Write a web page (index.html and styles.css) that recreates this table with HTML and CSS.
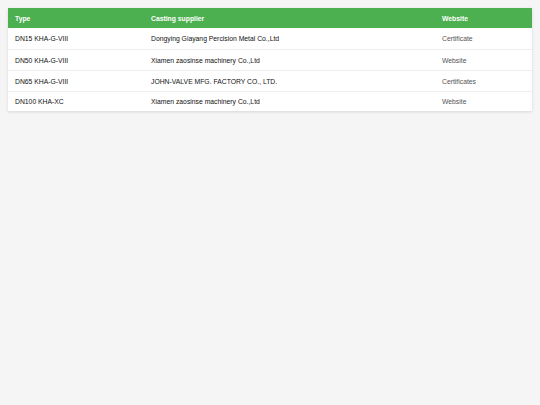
FILE: index.html
```html
<!DOCTYPE html>
<html lang="en">

<head>
    <meta charset="utf-8">
    <title>Casting suppliers</title>
    <link rel="stylesheet" href="styles.css">
</head>

<body>
    <table class="tab">
        <thead>
            <tr>
                <th class="c_type">Type</th>
                <th class="c_sup">Casting supplier</th>
                <th>Website</th>
            </tr>
        </thead>
        <tbody>
            <tr>
                <td>DN15 KHA-G-VIII</td>
                <td>Dongying Giayang Percision Metal Co.,Ltd</td>
                <td class="web">Certificate</td>
            </tr>
            <tr>
                <td>DN50 KHA-G-VIII</td>
                <td>Xiamen zaosinse machinery Co.,Ltd</td>
                <td class="web">Website</td>
            </tr>
            <tr>
                <td>DN65 KHA-G-VIII</td>
                <td>JOHN-VALVE MFG. FACTORY CO., LTD.</td>
                <td class="web">Certificates</td>
            </tr>
            <tr>
                <td>DN100 KHA-XC</td>
                <td>Xiamen zaosinse machinery Co.,Ltd</td>
                <td class="web">Website</td>
            </tr>
        </tbody>
    </table>
</body>

</html>
```

FILE: styles.css
```css
* {
    padding: 0;
    margin: 0;
}

html,
body {
    background: #f5f5f5;
    font-family: "Liberation Sans", Arial, sans-serif;
    font-size: 6.8px;
    color: #111;
}

body {
    padding: 8px;
}

.tab {
    width: 524px;
    border-collapse: collapse;
    background: #fff;
    box-shadow: 0 1px 3px rgba(0, 0, 0, 0.12);
}

.tab th {
    background: #4caf50;
    color: #fff;
    font-weight: bold;
    text-align: left;
    height: 20px;
    padding: 0 7px;
}

.tab td {
    height: 20px;
    padding: 0 7px;
    border-top: 1px solid #eee;
}

.tab tbody tr:first-child td {
    border-top: 0;
    height: 21px;
}

.tab tbody tr:last-child td {
    height: 19px;
}

.c_type {
    width: 122px;
}

.c_sup {
    width: 277px;
}

.tab td.web {
    color: #555;
}
```
